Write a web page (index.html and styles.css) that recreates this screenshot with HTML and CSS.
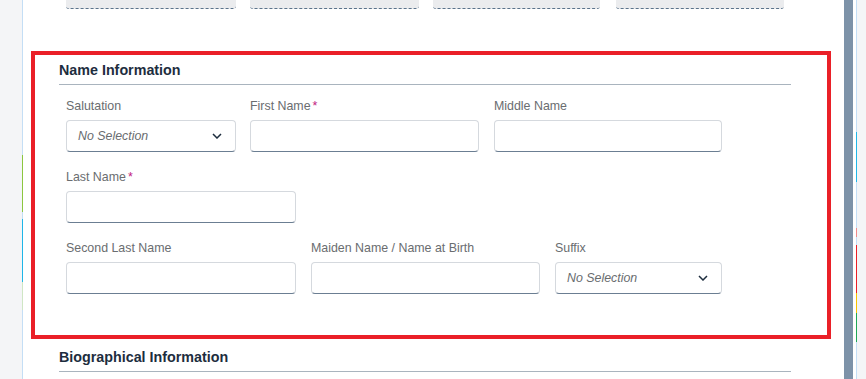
FILE: index.html
```html
<!DOCTYPE html>
<html lang="en">
<head>
    <meta charset="UTF-8">
    <meta name="viewport" content="width=device-width, initial-scale=1.0">
    <title>Personal Information</title>
    <link rel="stylesheet" href="styles.css">
</head>
<body>
    <div class="page">
        <div class="gutter"></div>
        <div class="rail rail-left"></div>

        <main class="content">
            <div class="summary-row">
                <div class="summary-box"></div>
                <div class="summary-box"></div>
                <div class="summary-box"></div>
                <div class="summary-box"></div>
            </div>

            <section class="form-section highlighted">
                <h3 class="section-title">Name Information</h3>

                <div class="field-row">
                    <div class="field w-select">
                        <label>Salutation</label>
                        <div class="select">
                            <span>No Selection</span>
                            <svg width="10" height="6" viewBox="0 0 10 6"><polyline points="1,1 5,5 9,1" fill="none" stroke="#1d2d3e" stroke-width="1.5"/></svg>
                        </div>
                    </div>
                    <div class="field w-first">
                        <label>First Name<span class="req">*</span></label>
                        <div class="input"></div>
                    </div>
                    <div class="field w-mid">
                        <label>Middle Name</label>
                        <div class="input"></div>
                    </div>
                </div>

                <div class="field-row">
                    <div class="field w-wide">
                        <label>Last Name<span class="req">*</span></label>
                        <div class="input"></div>
                    </div>
                </div>

                <div class="field-row last">
                    <div class="field w-wide">
                        <label>Second Last Name</label>
                        <div class="input"></div>
                    </div>
                    <div class="field w-first">
                        <label>Maiden Name / Name at Birth</label>
                        <div class="input"></div>
                    </div>
                    <div class="field w-suffix">
                        <label>Suffix</label>
                        <div class="select">
                            <span>No Selection</span>
                            <svg width="10" height="6" viewBox="0 0 10 6"><polyline points="1,1 5,5 9,1" fill="none" stroke="#1d2d3e" stroke-width="1.5"/></svg>
                        </div>
                    </div>
                </div>
            </section>

            <section class="form-section">
                <h3 class="section-title">Biographical Information</h3>
            </section>
        </main>

        <div class="scrollbar"></div>
        <div class="spacer"></div>
        <div class="rail rail-right"></div>
        <div class="gutter gutter-right"></div>
    </div>
</body>
</html>
```

FILE: styles.css
```css
body {
    margin: 0;
    font-family: 'Liberation Sans', Arial, sans-serif;
    background-color: #f4f5f7;
    color: #1d2d3e;
}
.page {
    display: flex;
    height: 379px;
    overflow: hidden;
}
.gutter {
    width: 22px;
    background-color: #f4f5f7;
}
.gutter-right {
    flex: 1;
}
.rail {
    width: 1px;
    background-color: #c4def5;
}
.rail-left {
    background: linear-gradient(to bottom,
        #c4def5 0, #c4def5 155px,
        #8cc63f 155px, #8cc63f 212px,
        #c4def5 212px, #c4def5 219px,
        #1fb6e8 219px, #1fb6e8 282px,
        #cfe6c4 282px, #cfe6c4 310px,
        #c4def5 310px);
}
.rail-right {
    background: linear-gradient(to bottom,
        #c4def5 0, #c4def5 132px,
        #1fb6e8 132px, #1fb6e8 182px,
        #c4def5 182px, #c4def5 228px,
        #f08a8a 228px, #f08a8a 237px,
        #c4def5 237px, #c4def5 245px,
        #ec2027 245px, #ec2027 293px,
        #f8c300 293px, #f8c300 313px,
        #1fa857 313px, #1fa857 342px,
        #c4def5 342px);
}
.content {
    width: 821px;
    background-color: #fff;
}
.scrollbar {
    width: 9px;
    background-color: #7d92a8;
}
.spacer {
    width: 3px;
    background-color: #fff;
}

/* top summary tiles, cut off by the viewport */
.summary-row {
    display: flex;
    gap: 14px;
    padding-left: 43px;
}
.summary-box {
    width: 170px;
    height: 8px;
    background-color: #ebecee;
    border-bottom: 1px dashed #5b738b;
    border-radius: 0 0 3px 3px;
}
.summary-box:nth-child(2) { width: 169px; }
.summary-box:nth-child(3) { width: 167px; }
.summary-box:nth-child(4) { width: 168px; margin-left: 2px; }

.form-section {
    padding: 0 53px 0 36px;
}
.form-section.highlighted {
    margin: 42px 13px 9px 8px;
    border: 4px solid #ea2028;
    padding: 6px 36px 41px 24px;
}
.section-title {
    margin: 0;
    font-size: 14.3px;
    line-height: 18px;
    font-weight: bold;
    color: #1d2d3e;
    padding-bottom: 5px;
    border-bottom: 1px solid #a9b4be;
}
.highlighted .section-title {
    margin-bottom: 11px;
}
.field-row {
    display: flex;
    gap: 15px;
    padding-left: 7px;
    margin-bottom: 15px;
}
.field-row.last {
    margin-bottom: 0;
}
.field label {
    display: block;
    font-size: 12.4px;
    line-height: 16px;
    color: #6a6d70;
    padding-top: 2px;
    margin-bottom: 6px;
}
.req {
    color: #c2247f;
    margin-left: 2px;
}
.w-select { width: 170px; margin-right: -1px; }
.w-first { width: 229px; }
.w-mid { width: 228px; }
.w-wide { width: 230px; }
.w-suffix { width: 167px; }

.input,
.select {
    box-sizing: border-box;
    height: 32px;
    border: 1px solid #d5d9de;
    border-bottom-color: #6b7e92;
    border-radius: 4px;
    background-color: #fff;
}
.select {
    display: flex;
    align-items: center;
    justify-content: space-between;
    padding: 0 13px 0 11px;
}
.select span {
    font-size: 12.4px;
    font-style: italic;
    color: #6a6d70;
}
.select svg {
    display: block;
}
```
